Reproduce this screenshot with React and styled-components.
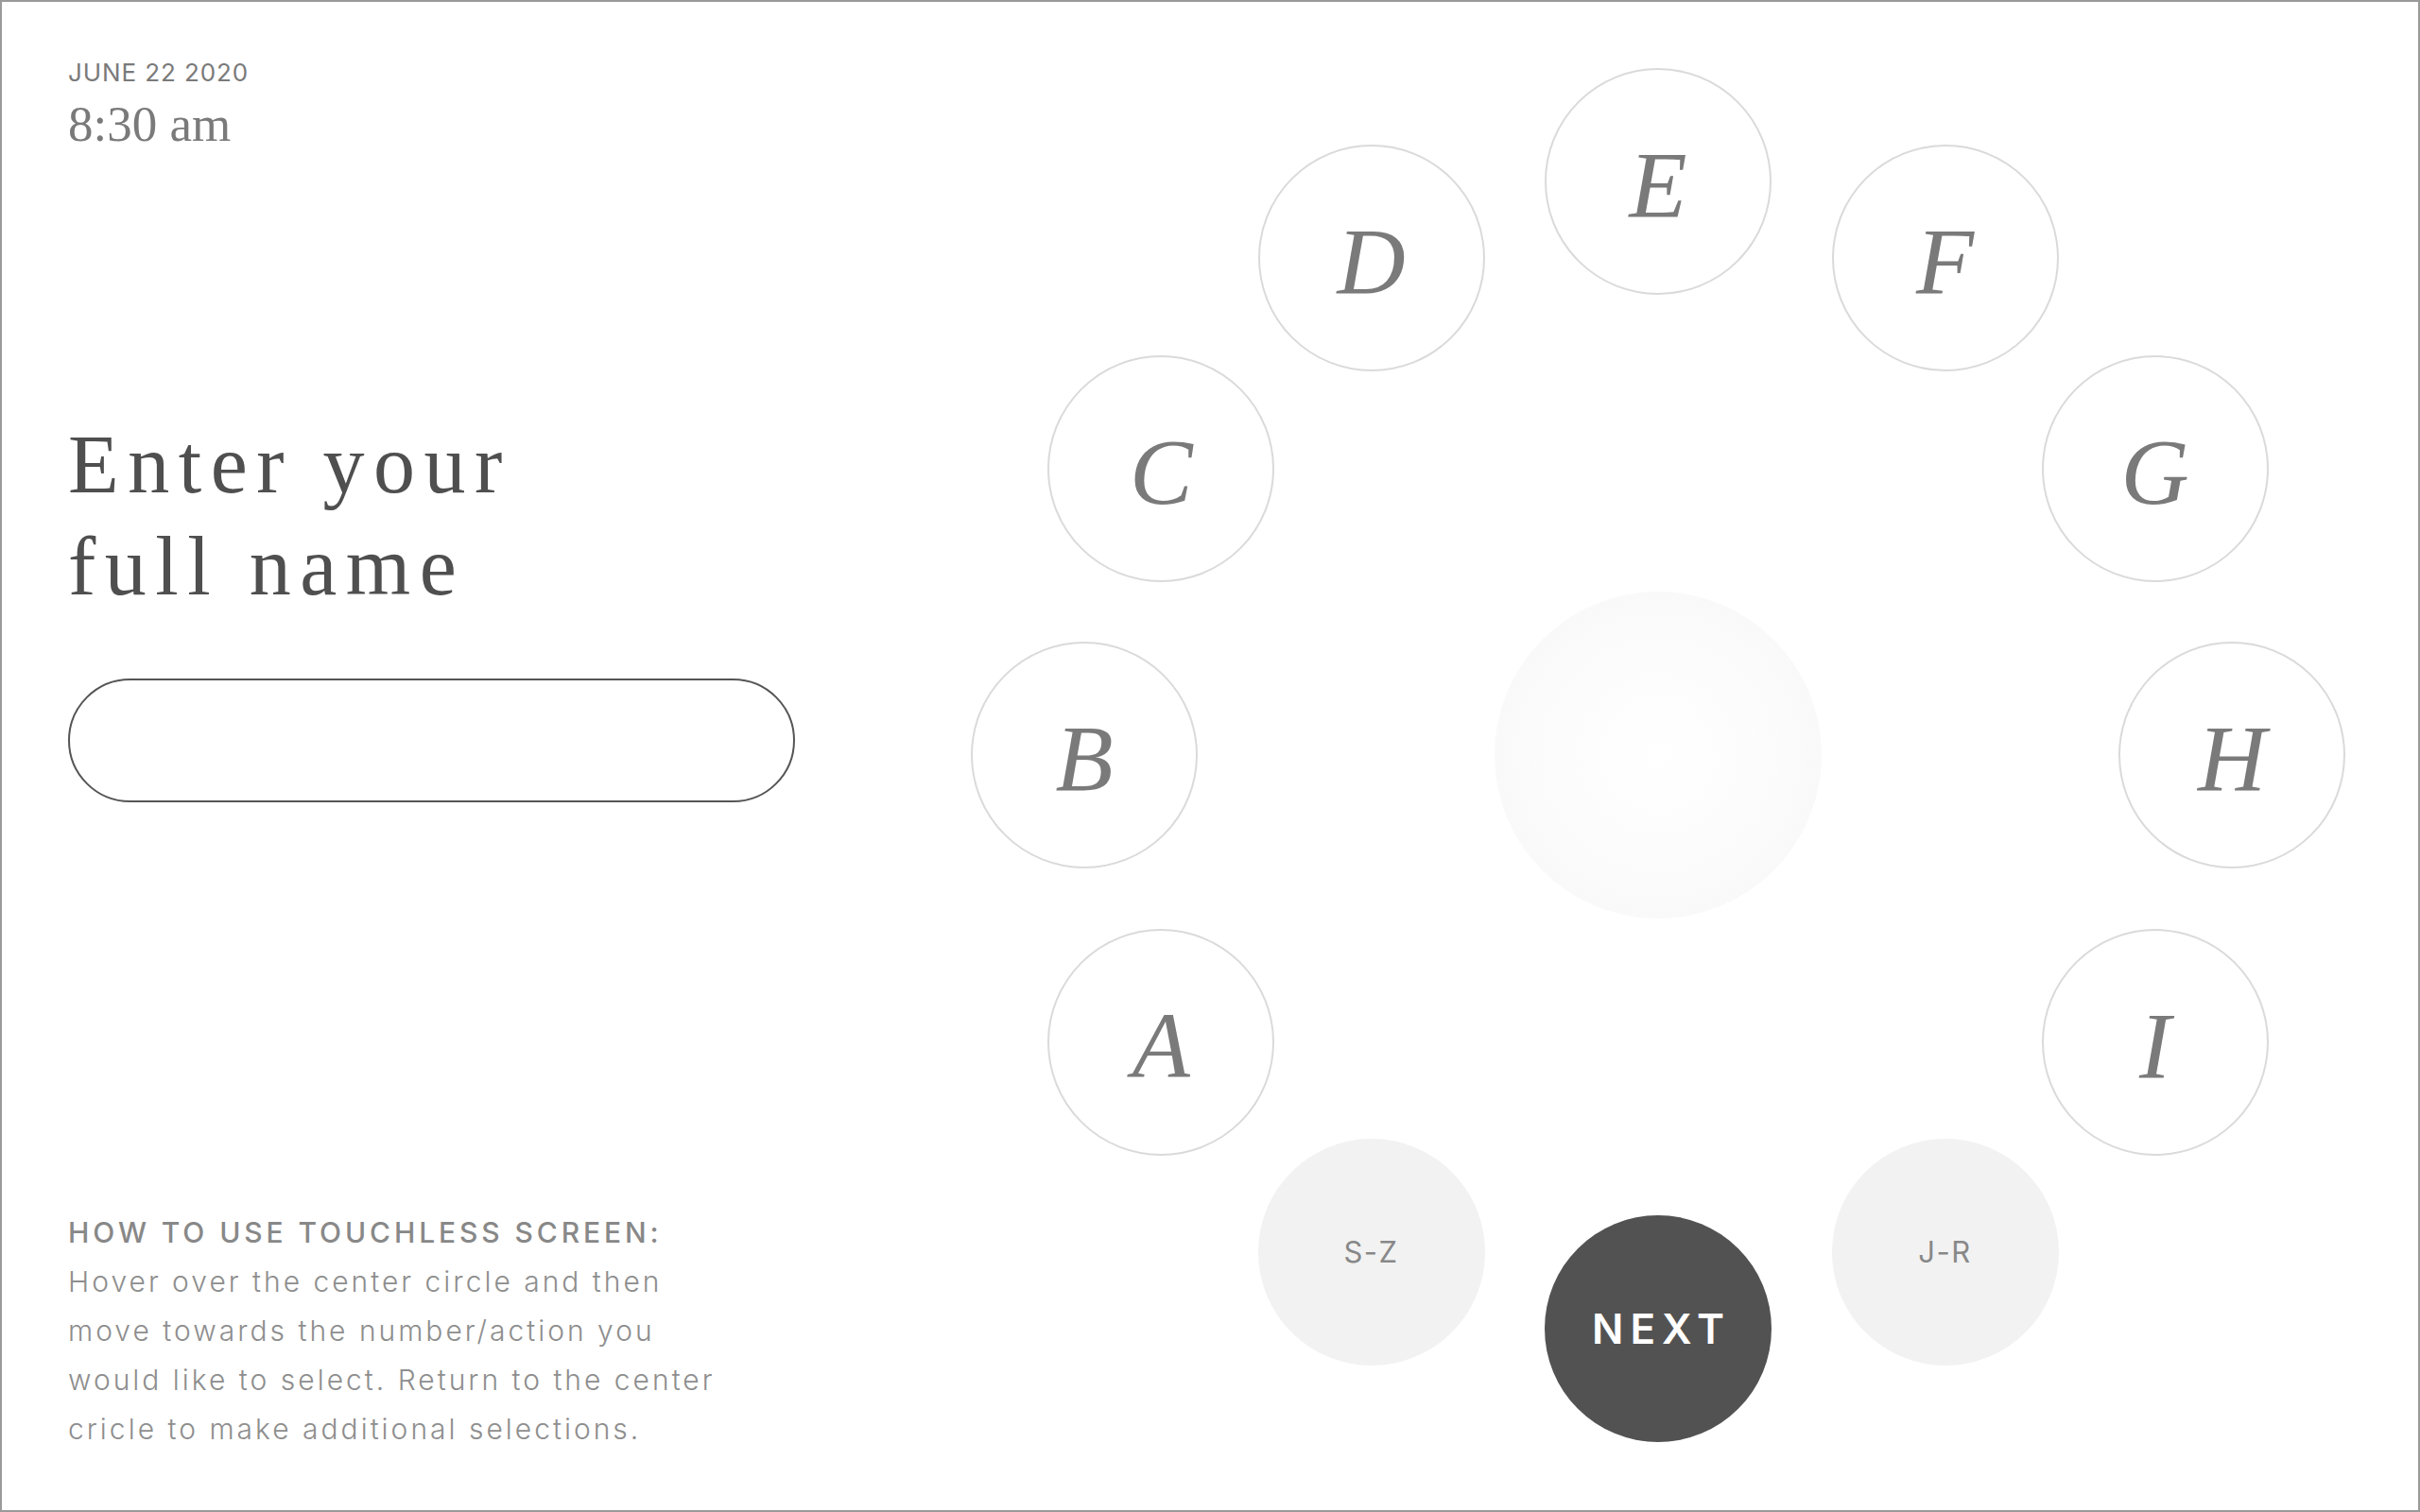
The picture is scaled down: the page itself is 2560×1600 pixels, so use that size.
import React from "react";
import styled, { createGlobalStyle } from "styled-components";

const Global = createGlobalStyle`
  html, body { margin: 0; padding: 0; background: #fff; }
  * { box-sizing: border-box; }
`;

const Frame = styled.div`
  width: 2560px;
  height: 1600px;
  border: 2px solid #9a9a9a;
  display: flex;
  background: #fff;
  overflow: hidden;
`;

const LeftCol = styled.section`
  width: 1025px;
  flex: none;
  display: flex;
  flex-direction: column;
  padding: 59px 0 60px 70px;
`;

const DateLine = styled.div`
  font-family: Inter, "Liberation Sans", sans-serif;
  font-size: 26px;
  line-height: 32px;
  letter-spacing: 0.9px;
  color: #7a7a7a;
`;

const TimeLine = styled.div`
  margin-top: 8px;
  font-family: "Liberation Serif", serif;
  font-size: 53px;
  line-height: 60px;
  color: #7a7a7a;
`;

const Title = styled.h1`
  margin: 277px 0 0;
  font-family: "Liberation Serif", serif;
  font-weight: 400;
  font-size: 88px;
  line-height: 108px;
  letter-spacing: 9.5px;
  color: #4f4f4f;
`;

const NameInput = styled.div`
  margin-top: 64px;
  width: 769px;
  height: 131px;
  border: 2px solid #555;
  border-radius: 66px;
`;

const Help = styled.div`
  margin-top: auto;
  font-family: Inter, "Liberation Sans", sans-serif;
  font-size: 30px;
  line-height: 52px;
  font-weight: 300;
  letter-spacing: 3px;
  color: #8e8e8e;
  white-space: nowrap;
`;

const HelpTitle = styled.div`
  font-size: 30px;
  font-weight: 500;
  color: #888;
  letter-spacing: 3.9px;
`;

const Dial = styled.div`
  position: relative;
  flex: none;
  width: 1454px;
  height: 1454px;
  margin-top: 70px;
`;

const Center = styled.div`
  position: absolute;
  left: 554px;
  top: 554px;
  width: 346px;
  height: 346px;
  border-radius: 50%;
  background: radial-gradient(circle, #ffffff 0%, #fcfcfc 45%, #f6f6f6 100%);
`;

const Node = styled.div`
  position: absolute;
  width: 240px;
  height: 240px;
  border-radius: 50%;
  display: flex;
  align-items: center;
  justify-content: center;
  border: 2px solid ${(p) => (p.$kind === "letter" ? "#dadada" : "transparent")};
  background: ${(p) =>
    p.$kind === "next" ? "#525252" : p.$kind === "group" ? "#f2f2f2" : "#fff"};
`;

const Letter = styled.span`
  font-family: "Liberation Serif", serif;
  font-style: italic;
  font-size: 100px;
  line-height: 1;
  color: #7a7a7a;
  transform: translateY(4px);
`;

const GroupLabel = styled.span`
  font-family: Inter, "Liberation Sans", sans-serif;
  font-size: 31px;
  letter-spacing: 1.5px;
  color: #888;
`;

const NextLabel = styled.span`
  font-family: Inter, "Liberation Sans", sans-serif;
  font-size: 44px;
  font-weight: 600;
  letter-spacing: 7px;
  margin-right: -7px;
  color: #fff;
`;

const nodes = [
  { label: "E", kind: "letter" },
  { label: "F", kind: "letter" },
  { label: "G", kind: "letter" },
  { label: "H", kind: "letter" },
  { label: "I", kind: "letter" },
  { label: "J-R", kind: "group" },
  { label: "NEXT", kind: "next" },
  { label: "S-Z", kind: "group" },
  { label: "A", kind: "letter" },
  { label: "B", kind: "letter" },
  { label: "C", kind: "letter" },
  { label: "D", kind: "letter" },
];

const R = 607;
const C = 727;

export default function App() {
  return (
    <>
      <Global />
      <Frame>
        <LeftCol>
          <DateLine>JUNE 22 2020</DateLine>
          <TimeLine>8:30 am</TimeLine>
          <Title>
            Enter your
            <br />
            full name
          </Title>
          <NameInput />
          <Help>
            <HelpTitle>HOW TO USE TOUCHLESS SCREEN:</HelpTitle>
            Hover over the center circle and then
            <br />
            move towards the number/action you
            <br />
            would like to select. Return to the center
            <br />
            cricle to make additional selections.
          </Help>
        </LeftCol>
        <Dial>
          <Center />
          {nodes.map((n, i) => {
            const a = ((-90 + 30 * i) * Math.PI) / 180;
            const left = C + R * Math.cos(a) - 120;
            const top = C + R * Math.sin(a) - 120;
            return (
              <Node key={n.label} $kind={n.kind} style={{ left, top }}>
                {n.kind === "letter" && <Letter>{n.label}</Letter>}
                {n.kind === "group" && <GroupLabel>{n.label}</GroupLabel>}
                {n.kind === "next" && <NextLabel>{n.label}</NextLabel>}
              </Node>
            );
          })}
        </Dial>
      </Frame>
    </>
  );
}
